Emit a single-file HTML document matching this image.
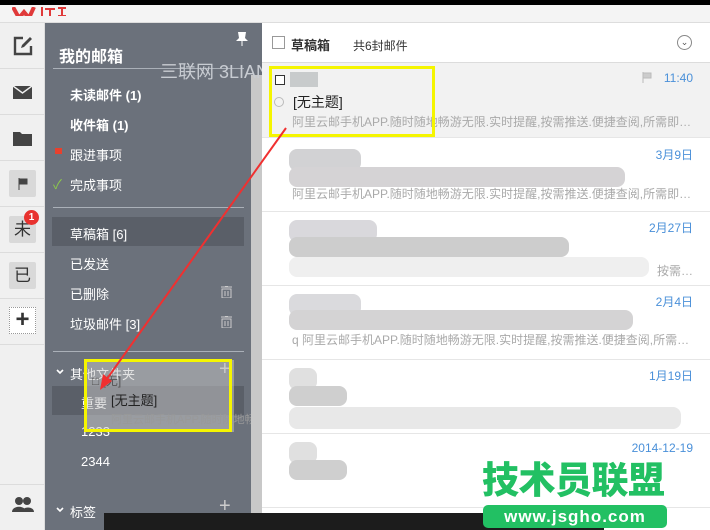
<!DOCTYPE html>
<html><head><meta charset="utf-8"><style>
*{margin:0;padding:0;box-sizing:border-box}
body{width:710px;height:530px;overflow:hidden;position:relative;background:#fff;font-family:"Liberation Sans","Noto Sans CJK SC",sans-serif;}
.a{position:absolute}
.ic{position:absolute;left:0;width:45px;height:46px;border-bottom:1px solid #dcdcdc}
.side{left:45px;top:23px;width:206px;height:507px;background:#6b717b;color:#fff;font-size:13px}
.si{position:absolute;left:25px;font-size:13px}
.row{position:absolute;left:262px;width:448px;border-bottom:1px solid #e6e6e6}
.time{position:absolute;right:17px;font-size:12px;color:#4a90d9}
.pre{position:absolute;left:30px;font-size:12px;color:#a9a9a9;white-space:nowrap}
.blur{position:absolute;background:#d2d2d4;border-radius:8px}
</style></head><body>
<div class="a" style="left:0;top:0;width:710px;height:5px;background:#000"></div>
<div class="a" style="left:0;top:5px;width:710px;height:18px;background:#f4f4f4;border-bottom:1px solid #ddd"></div>
<div class="a" style="left:12px;top:5px;width:55px;height:11px;overflow:hidden">
<svg width="55" height="11"><path d="M1 0l6 11 5-6 5 6 5-11" stroke="#e03a3a" stroke-width="4" fill="none"/><path d="M30 0v10M33 2h10M38 2v8M46 1h8M46 9h8M50 1v8" stroke="#e03a3a" stroke-width="2" fill="none"/></svg></div>
<!-- icon column -->
<div class="a" style="left:0;top:23px;width:45px;height:507px;background:#f0f0f0;border-right:1px solid #ddd"></div>
<div class="ic" style="top:23px"><svg class="a" style="left:13px;top:13px" width="20" height="20"><path d="M10 2H2v16h16v-8" stroke="#444" stroke-width="2.4" fill="none"/><path d="M8 12l1-3 8-8 2 2-8 8z" fill="#444"/></svg></div>
<div class="ic" style="top:69px"><svg class="a" style="left:13px;top:17px" width="19" height="13"><rect width="19" height="13" fill="#444"/><path d="M0 0l9.5 7L19 0" stroke="#f0f0f0" stroke-width="1.5" fill="none"/></svg></div>
<div class="ic" style="top:115px"><svg class="a" style="left:13px;top:15px" width="19" height="16"><path d="M0 2h7l2 2h10v12H0z" fill="#444"/></svg></div>
<div class="ic" style="top:161px"><div class="a" style="left:9px;top:9px;width:27px;height:27px;background:#d9d9d9;border-radius:2px"></div><svg class="a" style="left:18px;top:17px" width="10" height="12"><path d="M1 0v12M1 1h8v5H1" stroke="#444" fill="#444"/></svg></div>
<div class="ic" style="top:207px"><div class="a" style="left:9px;top:9px;width:27px;height:27px;background:#d9d9d9;border-radius:2px;font-size:17px;text-align:center;line-height:27px;color:#333">未</div><div class="a" style="left:24px;top:3px;width:15px;height:15px;background:#e8322f;border-radius:50%;color:#fff;font-size:10px;text-align:center;line-height:15px;font-weight:bold">1</div></div>
<div class="ic" style="top:253px"><div class="a" style="left:9px;top:9px;width:27px;height:27px;background:#d9d9d9;border-radius:2px;font-size:17px;text-align:center;line-height:27px;color:#333">已</div></div>
<div class="ic" style="top:299px"><div class="a" style="left:9px;top:8px;width:27px;height:27px;background:#fff;border:1px dotted #999;font-size:24px;text-align:center;line-height:24px;color:#333;font-weight:bold">+</div></div>
<div class="a" style="left:0;top:484px;width:45px;height:1px;background:#dcdcdc"></div>
<svg class="a" style="left:12px;top:497px" width="22" height="15"><circle cx="7" cy="4" r="4" fill="#444"/><circle cx="15" cy="4" r="4" fill="#444"/><path d="M0 15c0-7 14-7 14 0zM10 15c0-6 12-6 12 0z" fill="#444"/></svg>
<!-- sidebar -->
<div class="a side">
<svg class="a" style="left:191px;top:9px" width="12" height="14"><path d="M2 0h8l-1 6 3 3H0l3-3zM5.5 9h1v5h-1z" fill="#fff"/></svg>
<div class="si" style="left:14px;top:20px;font-size:16px;font-weight:bold">我的邮箱</div>
<div class="a" style="left:8px;top:45px;width:191px;height:1px;background:#aab0b8"></div>
<div class="si" style="top:62px;font-weight:bold">未读邮件 (1)</div>
<div class="si" style="top:92px;font-weight:bold">收件箱 (1)</div>
<div class="a" style="left:10px;top:125px;width:7px;height:6px;background:#e8402d"></div>
<div class="si" style="top:122px">跟进事项</div>
<div class="a" style="left:8px;top:151px;color:#8cc84b;font-size:13px">✓</div>
<div class="si" style="top:152px">完成事项</div>
<div class="a" style="left:8px;top:184px;width:191px;height:1px;background:#aab0b8"></div>
<div class="a" style="left:7px;top:194px;width:192px;height:29px;background:#5a5f68"></div>
<div class="si" style="top:201px">草稿箱 [6]</div>
<div class="si" style="top:231px">已发送</div>
<div class="si" style="top:261px">已删除</div>
<div class="si" style="top:291px">垃圾邮件 [3]</div>
<svg class="a" style="left:176px;top:263px" width="11" height="12"><path d="M0 1h11M4 0h3M1 3h9v9H1z" stroke="#ccc" fill="none"/><path d="M4 5v5M7 5v5" stroke="#ccc"/></svg>
<svg class="a" style="left:176px;top:293px" width="11" height="12"><path d="M0 1h11M4 0h3M1 3h9v9H1z" stroke="#ccc" fill="none"/><path d="M4 5v5M7 5v5" stroke="#ccc"/></svg>
<div class="a" style="left:8px;top:328px;width:191px;height:1px;background:#aab0b8"></div>
<svg class="a" style="left:11px;top:346px" width="8" height="6"><path d="M1 1l3 3 3-3" stroke="#fff" stroke-width="1.6" fill="none"/></svg>
<div class="si" style="top:341px">其他文件夹</div>
<div class="a" style="left:174px;top:335px;font-size:20px;color:#ccc">+</div>
<div class="a" style="left:7px;top:363px;width:192px;height:29px;background:#5a5f68"></div>
<div class="si" style="left:36px;top:370px">重要</div>
<div class="si" style="left:36px;top:401px">1233</div>
<div class="si" style="left:36px;top:431px">2344</div>
<svg class="a" style="left:11px;top:484px" width="8" height="6"><path d="M1 1l3 3 3-3" stroke="#fff" stroke-width="1.6" fill="none"/></svg>
<div class="si" style="top:479px">标签</div>
<div class="a" style="left:174px;top:472px;font-size:20px;color:#ccc">+</div>
</div>
<div class="a" style="left:251px;top:75px;width:11px;height:455px;background:#c8c8c8"></div>
<div class="a" style="left:251px;top:23px;width:11px;height:52px;background:#6b717b"></div>
<!-- main -->
<div class="a" style="left:262px;top:23px;width:448px;height:40px;border-bottom:1px solid #dcdcdc"></div>
<div class="a" style="left:272px;top:36px;width:13px;height:13px;border:1px solid #999"></div>
<div class="a" style="left:291px;top:35px;font-size:13px;font-weight:bold;color:#333">草稿箱</div>
<div class="a" style="left:353px;top:37px;font-size:12px;color:#333">共6封邮件</div>
<div class="a" style="left:677px;top:35px;width:15px;height:15px;border:1px solid #888;border-radius:50%;font-size:9px;text-align:center;line-height:12px;color:#555">⌄</div>
<div class="a" style="left:160px;top:58px;font-size:18px;color:#c8ccd2">三联网 3LIAN.COM</div>
<div class="row" style="top:63px;height:75px;background:#f2f2f2">
<div class="a" style="left:13px;top:12px;width:10px;height:10px;border:1px solid #333;background:#fff"></div>
<div class="a" style="left:28px;top:9px;width:28px;height:15px;background:#c8cbcc"></div>
<div class="a" style="left:12px;top:34px;width:10px;height:10px;border:1px solid #bbb;border-radius:50%"></div>
<div class="a" style="left:31px;top:29px;font-size:14px;color:#222">[无主题]</div>
<div class="pre" style="top:50px">阿里云邮手机APP.随时随地畅游无限.实时提醒,按需推送.便捷查阅,所需即…</div>
<svg class="a" style="left:380px;top:9px" width="10" height="11"><path d="M1 0v11M1 1h8v5H1" stroke="#bbb" fill="#ccc"/></svg>
<div class="time" style="top:8px">11:40</div></div>
<div class="row" style="top:139px;height:73px">
<div class="blur" style="left:27px;top:10px;width:72px;height:22px"></div>
<div class="blur" style="left:27px;top:28px;width:336px;height:20px;background:#d5d3d5"></div>
<div class="pre" style="top:46px">阿里云邮手机APP.随时随地畅游无限.实时提醒,按需推送.便捷查阅,所需即…</div>
<div class="time" style="top:7px">3月9日</div></div>
<div class="row" style="top:212px;height:74px">
<div class="blur" style="left:27px;top:8px;width:88px;height:22px;background:#d9d8dc"></div>
<div class="blur" style="left:27px;top:25px;width:280px;height:20px;background:#cdcdcd"></div>
<div class="blur" style="left:27px;top:45px;width:360px;height:20px;background:#efefef"></div>
<div class="pre" style="left:395px;top:50px">按需…</div>
<div class="time" style="top:7px">2月27日</div></div>
<div class="row" style="top:286px;height:74px">
<div class="blur" style="left:27px;top:8px;width:72px;height:22px;background:#dadadd"></div>
<div class="blur" style="left:27px;top:24px;width:344px;height:20px;background:#d4d3d4"></div>
<div class="pre" style="top:45px">q 阿里云邮手机APP.随时随地畅游无限.实时提醒,按需推送.便捷查阅,所需…</div>
<div class="time" style="top:7px">2月4日</div></div>
<div class="row" style="top:360px;height:74px">
<div class="blur" style="left:27px;top:8px;width:28px;height:22px;background:#e0e0e0"></div>
<div class="blur" style="left:27px;top:26px;width:58px;height:20px;background:#cfcfcf"></div>
<div class="blur" style="left:27px;top:47px;width:392px;height:22px;background:#e8e8e8"></div>
<div class="time" style="top:7px">1月19日</div></div>
<div class="row" style="top:434px;height:74px">
<div class="blur" style="left:27px;top:8px;width:28px;height:22px;background:#e0e0e0"></div>
<div class="blur" style="left:27px;top:26px;width:58px;height:20px;background:#cfcfcf"></div>
<div class="time" style="top:7px">2014-12-19</div></div>
<!-- drag ghost -->
<div class="a" style="left:84px;top:360px;width:150px;height:72px;background:rgba(200,200,200,0.5)"></div>
<div class="a" style="left:111px;top:390px;font-size:13px;color:#222">[无主题]</div>
<div class="a" style="left:111px;top:411px;font-size:11px;color:#999;white-space:nowrap;width:140px;overflow:hidden">阿里云邮手机APP.随时随地畅游</div>
<div class="a" style="left:92px;top:372px;font-size:12px;color:#555">□ [无]</div>
<div class="a" style="left:269px;top:66px;width:166px;height:71px;border:3px solid #f5f500"></div>
<div class="a" style="left:84px;top:359px;width:148px;height:73px;border:3px solid #f5f500"></div>
<svg class="a" style="left:0;top:0" width="710" height="530"><path d="M286 128L104 383" stroke="#f03030" stroke-width="2"/><path d="M100 390l3-16 9 7z" fill="#f03030"/></svg>
<!-- bottom bar -->
<div class="a" style="left:104px;top:513px;width:500px;height:17px;background:#1c1c1c"></div>
<!-- watermark -->
<div class="a" style="left:482px;top:459px;font-size:37px;font-weight:900;color:#22c063;letter-spacing:-0.5px;line-height:44px">技术员联盟</div>
<div class="a" style="left:483px;top:505px;width:184px;height:23px;background:#22c063;border-radius:5px;color:#fff;font-size:17px;font-weight:bold;text-align:center;line-height:23px;letter-spacing:1px">www.jsgho.com</div>
</body></html>
